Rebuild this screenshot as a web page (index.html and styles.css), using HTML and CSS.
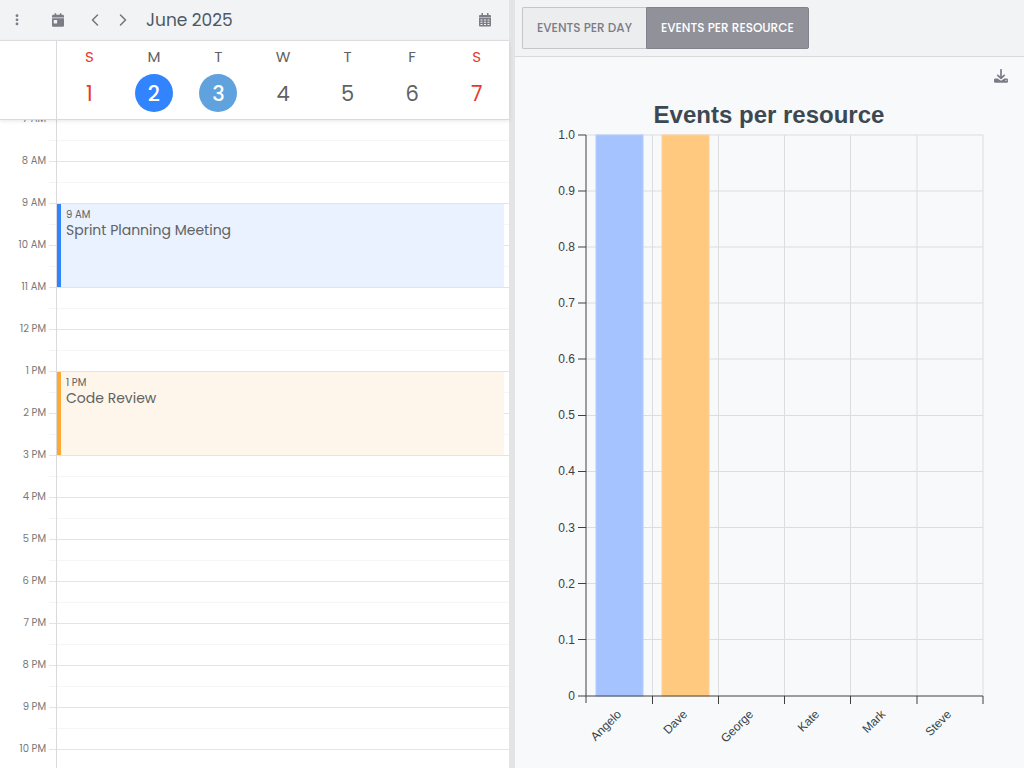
FILE: index.html
```html
<!DOCTYPE html>
<html lang="en">
<head>
<meta charset="utf-8">
<title>Calendar and charts</title>
<link rel="stylesheet" href="styles.css">
</head>
<body>
<main class="app">
  <section class="calendar" aria-label="Calendar">
    <header class="toolbar">
      <button class="icon-btn menu-btn" aria-label="Menu"><svg width="4" height="12" viewBox="0 0 4 12"><circle cx="2" cy="1.700" r="1.400"/><circle cx="2" cy="5.800" r="1.400"/><circle cx="2" cy="9.900" r="1.400"/></svg></button>
      <button class="icon-btn" aria-label="Today"><svg width="12" height="14" viewBox="0 0 448 512"><path d="M0 464c0 26.500 21.500 48 48 48h352c26.500 0 48-21.500 48-48V192H0v272zm64-192c0-8.800 7.200-16 16-16h96c8.800 0 16 7.200 16 16v96c0 8.800-7.200 16-16 16H80c-8.800 0-16-7.200-16-16v-96zM400 64h-48V16c0-8.800-7.200-16-16-16h-32c-8.800 0-16 7.200-16 16v48H160V16c0-8.800-7.200-16-16-16h-32c-8.800 0-16 7.200-16 16v48H48C21.500 64 0 85.500 0 112v48h448v-48c0-26.500-21.500-48-48-48z"/></svg></button>
      <button class="icon-btn prev-btn" aria-label="Previous"><svg class="chevron" width="8" height="12" viewBox="0 0 8 12"><path d="M6.500 1 1.500 6l5 5"/></svg></button>
      <button class="icon-btn" aria-label="Next"><svg class="chevron" width="8" height="12" viewBox="0 0 8 12"><path d="m1.500 1 5 5-5 5"/></svg></button>
      <h1 class="month">June 2025</h1>
      <button class="icon-btn picker-btn" aria-label="Choose date"><svg width="12" height="14" viewBox="0 0 12 14"><path fill-rule="evenodd" d="M2.500 0h1.500v2h4V0h1.500v2H11a1 1 0 0 1 1 1v1.500H0V3a1 1 0 0 1 1-1h1.500zM0 5h12v7.500a1 1 0 0 1-1 1H1a1 1 0 0 1-1-1zM1.500 6.400v1.100h2V6.400zM5 6.400v1.100h2V6.400zm3.500 0v1.100h2V6.400zM1.500 8.700v1.100h2V8.700zM5 8.700v1.100h2V8.700zm3.500 0v1.100h2V8.700zM1.500 11v1h2v-1zm3.500 0v1h2v-1zm3.500 0v1h2v-1z"/></svg></button>
    </header>
    <div class="week">
      <div class="corner"></div>
      <div class="day weekend"><span>S</span><b>1</b></div>
      <div class="day"><span>M</span><b class="today">2</b></div>
      <div class="day"><span>T</span><b class="selected">3</b></div>
      <div class="day"><span>W</span><b>4</b></div>
      <div class="day"><span>T</span><b>5</b></div>
      <div class="day"><span>F</span><b>6</b></div>
      <div class="day weekend"><span>S</span><b>7</b></div>
    </div>
    <div class="schedule">
      <div class="times">
        <div class="time"><span>7 AM</span></div>
        <div class="time"><span>8 AM</span></div>
        <div class="time"><span>9 AM</span></div>
        <div class="time"><span>10 AM</span></div>
        <div class="time"><span>11 AM</span></div>
        <div class="time"><span>12 PM</span></div>
        <div class="time"><span>1 PM</span></div>
        <div class="time"><span>2 PM</span></div>
        <div class="time"><span>3 PM</span></div>
        <div class="time"><span>4 PM</span></div>
        <div class="time"><span>5 PM</span></div>
        <div class="time"><span>6 PM</span></div>
        <div class="time"><span>7 PM</span></div>
        <div class="time"><span>8 PM</span></div>
        <div class="time"><span>9 PM</span></div>
        <div class="time"><span>10 PM</span></div>
      </div>
      <div class="slots">
        <article class="event event-planning"><small>9 AM</small><p>Sprint Planning Meeting</p></article>
        <article class="event event-review"><small>1 PM</small><p>Code Review</p></article>
      </div>
    </div>
  </section>
  <div class="splitter"></div>
  <section class="charts" aria-label="Charts">
    <header class="chart-toolbar">
      <button class="tab">EVENTS PER DAY</button><button class="tab active" aria-pressed="true">EVENTS PER RESOURCE</button>
    </header>
    <div class="chart-actions">
      <button class="icon-btn" aria-label="Download"><svg width="14" height="14" viewBox="0 0 14 14"><path class="arrow" d="M7 .8v8.500M3.800 6.300 7 9.300l3.200-3"/><path fill-rule="evenodd" d="M1.300 9.500h2.200L7 11.800l3.500-2.300h2.200A1.300 1.300 0 0 1 14 10.800v1.700a1.300 1.300 0 0 1-1.300 1.300H1.300A1.300 1.300 0 0 1 0 12.500v-1.700a1.300 1.300 0 0 1 1.300-1.300zm10.200 1.600v1h1v-1z"/></svg></button>
    </div>
    <svg class="chart" viewBox="515 95 509 673" role="img" aria-label="Events per resource">
      <text class="chart-title" x="769" y="123">Events per resource</text>
      <path class="grid" d="M586 135h397M586 191h397M586 247h397M586 303h397M586 359h397M586 415.500h397M586 471.500h397M586 527.500h397M586 583.500h397M586 639.500h397M652.500 135v561M718.500 135v561M784.500 135v561M850.500 135v561M917 135v561M983 135v561"/>
      <rect class="bar bar-angelo" x="596" y="135" width="47" height="561"/>
      <rect class="bar bar-dave" x="662" y="135" width="47" height="561"/>
      <path class="axis" d="M586 135v568M578 696h405M578 135h8M578 191h8M578 247h8M578 303h8M578 359h8M578 415.500h8M578 471.500h8M578 527.500h8M578 583.500h8M578 639.500h8M652.500 696v8M718.500 696v8M784.500 696v8M850.500 696v8M917 696v8M983 696v8"/>
      <g class="y-labels">
        <text x="575" y="139">1.0</text><text x="575" y="195">0.9</text><text x="575" y="251">0.8</text><text x="575" y="307">0.7</text><text x="575" y="363">0.6</text><text x="575" y="419">0.5</text><text x="575" y="475">0.4</text><text x="575" y="532">0.3</text><text x="575" y="588">0.2</text><text x="575" y="644">0.1</text><text x="575" y="700">0</text>
      </g>
      <g class="x-labels">
        <text transform="translate(622 715) rotate(-45)">Angelo</text>
        <text transform="translate(688 715) rotate(-45)">Dave</text>
        <text transform="translate(754 715) rotate(-45)">George</text>
        <text transform="translate(820 715) rotate(-45)">Kate</text>
        <text transform="translate(886 715) rotate(-45)">Mark</text>
        <text transform="translate(952 715) rotate(-45)">Steve</text>
      </g>
    </svg>
  </section>
</main>
</body>
</html>
```
FILE: styles.css
```css
* { box-sizing: border-box; }
body { margin: 0; font-family: Poppins, Inter, "Open Sans", sans-serif; color: #606263; background: #fff; }
button { font: inherit; cursor: pointer; }
.app { display: grid; grid-template-columns: 1fr 6px 1fr; height: 100vh; overflow: hidden; }
.calendar { display: flex; flex-direction: column; min-width: 0; min-height: 0; }
.toolbar { display: flex; align-items: center; flex: none; height: 41px; padding: 0 18px 0 11px; background: #f2f3f5; border-bottom: 1px solid #e2e2e4; }
.icon-btn { display: flex; justify-content: center; padding: 0; width: 12px; border: 0; background: none; fill: #7b7c86; }
.icon-btn svg { flex: none; }
.menu-btn { margin-right: 29px; }
.prev-btn { margin: 0 16px 0 25px; }
.chevron { fill: none; stroke: #73747e; stroke-width: 1.5; stroke-linecap: round; stroke-linejoin: round; }
.month { margin: 0 0 0 17px; font-size: 17px; line-height: 24px; font-weight: 400; color: #4f5964; }
.picker-btn { margin-left: auto; }
.week { display: grid; grid-template-columns: 57px repeat(7, 1fr); flex: none; height: 79px; border-bottom: 1px solid #dadadc; box-shadow: 0 1px 4px rgba(0, 0, 0, .1); position: relative; z-index: 1; background: #fff; }
.corner { border-right: 1px solid #dadadc; }
.day { display: flex; flex-direction: column; align-items: center; padding-top: 6px; font-size: 15px; line-height: 20px; }
.day b { width: 38px; height: 38px; margin-top: 7px; border-radius: 50%; font-size: 21px; line-height: 40px; font-weight: 400; text-align: center; }
.weekend { color: #e8392b; }
.day .today, .day .selected { color: #fff; font-weight: 500; background: #3183fe; }
.day .selected { background: #5fa2dd; }
.schedule { display: grid; grid-template-columns: 57px 1fr; flex: 1; min-height: 0; margin-top: -1px; overflow: hidden; }
.times { padding-left: 49px; border-right: 1px solid #dadadc; }
.time { display: flex; justify-content: flex-end; height: 42px; background: linear-gradient(#e4e4e6 0 1px, transparent 1px 21px, #f4f4f5 21px 22px, transparent 22px); }
.time span { flex: none; height: 14px; margin: -7px 10px 0 0; font-size: 10px; line-height: 14px; color: #77797a; white-space: nowrap; }
.slots { display: grid; grid-template-rows: repeat(16, 42px); align-content: start; padding-right: 5px; background: repeating-linear-gradient(#e4e4e6 0 1px, transparent 1px 21px, #f6f6f7 21px 22px, transparent 22px 42px); }
.event { margin-top: 1px; padding: 4px 5px; border-left: 4px solid; }
.event small { display: block; font-size: 10px; line-height: 13px; color: #606263; }
.event p { margin: 0; font-size: 14px; line-height: 18px; color: #606263; }
.event-planning { grid-row: 3 / span 2; background: #eaf2ff; border-color: #3183fe; }
.event-review { grid-row: 7 / span 2; background: #fff6eb; border-color: #ffa832; }
.splitter { background: #e4e4e6; }
.charts { display: flex; flex-direction: column; min-width: 0; min-height: 0; background: #f8f9fb; }
.chart-toolbar { display: flex; flex: none; height: 57px; padding: 7px; background: #f2f3f5; border-bottom: 1px solid #d8d9dc; }
.tab { height: 42px; padding: 0 14px; border: 1px solid #c5c6ca; border-right: 0; border-radius: 2px 0 0 2px; background: #ecedef; color: #7b7c86; font-size: 12px; line-height: 18px; font-weight: 500; }
.tab.active { border: 1px solid #82838e; border-radius: 0 2px 2px 0; background: #91919a; color: #fff; }
.chart-actions { display: flex; justify-content: flex-end; flex: none; height: 38px; padding: 12px 17px 0 0; }
.chart { display: block; flex: 1; width: 100%; min-height: 0; font-family: "Liberation Sans", Arial, sans-serif; }
.arrow { fill: none; stroke: #7b7c86; stroke-width: 1.7; stroke-linecap: round; stroke-linejoin: round; }
.chart-title { font-size: 24px; font-weight: 700; text-anchor: middle; fill: #3c4852; }
.grid { stroke: #dddde0; }
.axis { fill: none; stroke: #404040; }
.bar { stroke-width: 1; }
.bar-angelo { fill: #a5c4ff; stroke: #b1ccff; }
.bar-dave { fill: #ffc980; stroke: #ffd092; }
.y-labels, .x-labels { font-size: 12px; text-anchor: end; fill: #404040; }
```
